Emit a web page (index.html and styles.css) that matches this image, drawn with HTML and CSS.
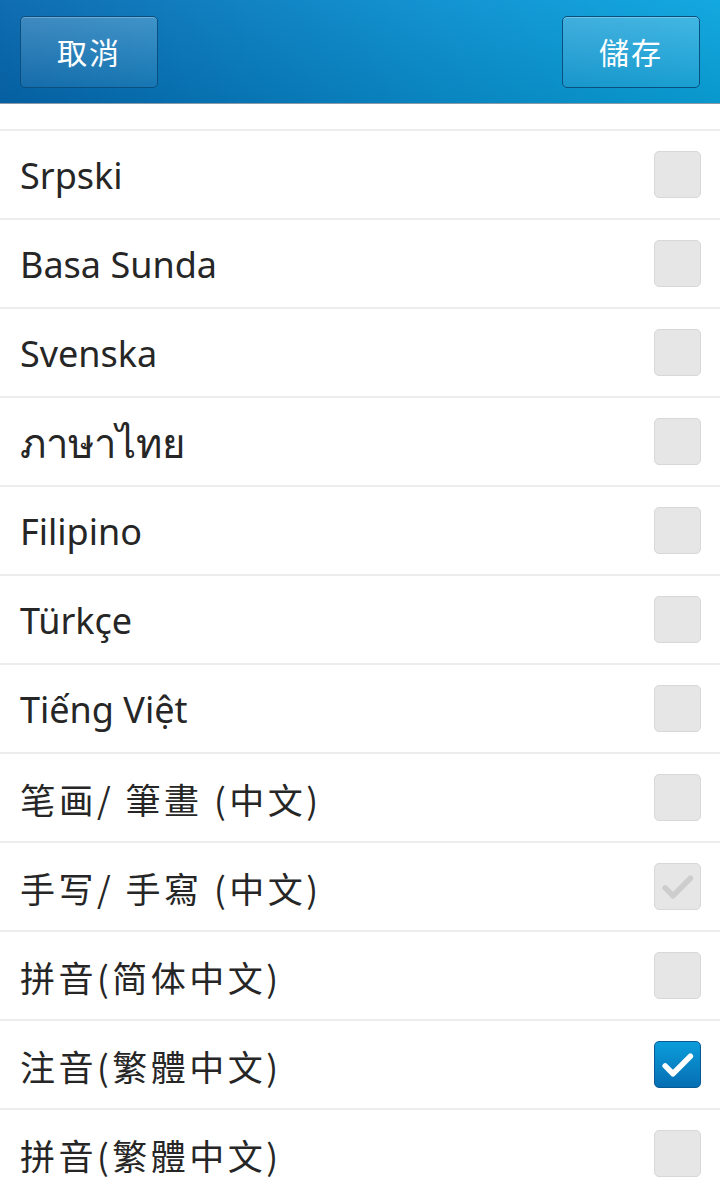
FILE: index.html
```html
<!DOCTYPE html>
<html lang="zh-Hant">

<head>
  <meta charset="UTF-8">
  <meta name="viewport" content="width=device-width, initial-scale=1.0">
  <title>輸入語言</title>
  <link rel="stylesheet" href="styles.css">
</head>

<body>
  <header class="titlebar">
    <button class="tb-btn">取消</button>
    <button class="tb-btn">儲存</button>
  </header>
  <ul class="lang-list">
    <li class="row"><span class="label">Srpski</span><span class="box"></span></li>
    <li class="row"><span class="label">Basa Sunda</span><span class="box"></span></li>
    <li class="row"><span class="label">Svenska</span><span class="box"></span></li>
    <li class="row"><span class="label thai">ภาษาไทย</span><span class="box"></span></li>
    <li class="row"><span class="label">Filipino</span><span class="box"></span></li>
    <li class="row"><span class="label">Türkçe</span><span class="box"></span></li>
    <li class="row"><span class="label">Tiếng Việt</span><span class="box"></span></li>
    <li class="row"><span class="label cjk">笔画/ 筆畫 (中文)</span><span class="box"></span></li>
    <li class="row">
      <span class="label cjk">手写/ 手寫 (中文)</span>
      <span class="box disabled">
        <svg viewBox="0 0 48 48"><path d="M10 25l8.5 8.5 19-19" /></svg>
      </span>
    </li>
    <li class="row"><span class="label cjk">拼音(简体中文)</span><span class="box"></span></li>
    <li class="row">
      <span class="label cjk">注音(繁體中文)</span>
      <span class="box checked">
        <svg viewBox="0 0 48 48"><path d="M10 25l8.5 8.5 19-19" /></svg>
      </span>
    </li>
    <li class="row"><span class="label cjk">拼音(繁體中文)</span><span class="box"></span></li>
  </ul>
</body>

</html>
```

FILE: styles.css
```css
:root {
  font-family: 'Noto Sans', 'Open Sans', 'Noto Sans CJK TC', sans-serif;
}

body {
  margin: 0;
  padding: 0;
  background-color: white;
  color: #262626;
  overflow: hidden;
}

.titlebar {
  height: 104px;
  padding: 16px 20px 0 20px;
  display: flex;
  justify-content: space-between;
  align-items: flex-start;
  box-sizing: border-box;
  background: linear-gradient(to bottom, rgba(255, 255, 255, 0.04), rgba(0, 0, 0, 0.08)),
    linear-gradient(to right, #0667ae, #0a8fcf 60%, #0aa5de);
  border-bottom: 1px solid #8a9aa6;
}

.tb-btn {
  width: 138px;
  height: 72px;
  border: 1px solid #0b4f80;
  border-radius: 5px;
  background: linear-gradient(to bottom, rgba(255, 255, 255, 0.2), rgba(255, 255, 255, 0.06));
  box-shadow: inset 0 1px 0 rgba(255, 255, 255, 0.25);
  color: white;
  font-family: 'Noto Sans CJK TC', sans-serif;
  font-size: 30px;
  letter-spacing: 2px;
  padding: 0 0 2px 0;
}

.lang-list {
  list-style: none;
  margin: 0;
  padding: 25px 0 0 0;
}

.row {
  height: 87px;
  border-top: 2px solid #ececec;
  display: flex;
  align-items: center;
  justify-content: space-between;
  padding: 0 19px 0 20px;
}

.label {
  font-size: 36px;
  line-height: 1;
  padding-top: 2px;
}

.label.thai {
  font-family: 'Noto Sans', 'DejaVu Sans', sans-serif;
  font-size: 40px;
  font-weight: 500;
}

.label.cjk {
  font-family: 'Noto Sans CJK SC', sans-serif;
  font-size: 35px;
  letter-spacing: 3.5px;
}

.box {
  width: 45px;
  height: 45px;
  border: 1px solid #d8d8d8;
  border-radius: 5px;
  background-color: #e6e6e6;
  display: flex;
  align-items: center;
  justify-content: center;
}

.box svg {
  width: 44px;
  height: 44px;
  fill: none;
  stroke-width: 6;
  stroke-linecap: round;
  stroke-linejoin: round;
}

.box.disabled svg {
  stroke: #cdcdcd;
}

.box.checked {
  border-color: #075a94;
  background: linear-gradient(to bottom, #0b9ddb, #066eb3);
}

.box.checked svg {
  stroke: white;
}
```
